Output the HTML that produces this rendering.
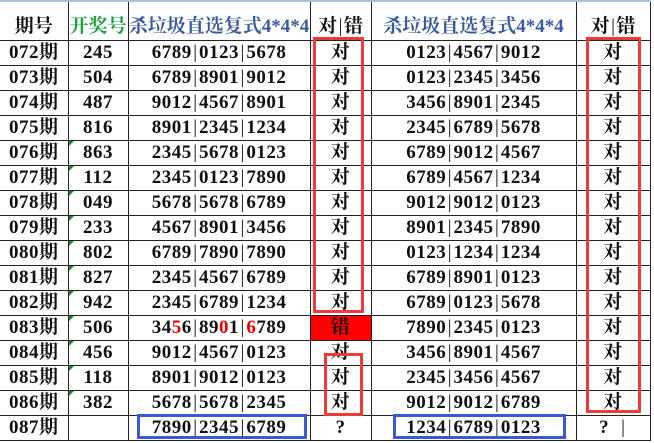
<!DOCTYPE html>
<html><head><meta charset="utf-8"><style>
html,body{margin:0;padding:0;background:#fff;width:654px;height:443px;overflow:hidden;position:relative}
table{position:absolute;left:0;top:0;border-collapse:collapse;table-layout:fixed;font-family:"Liberation Serif","Noto Serif CJK SC",serif;font-weight:bold;font-size:19px;color:#111;letter-spacing:0.5px}
td{border:1px solid #222;height:24px;line-height:22px;padding:0;text-align:center;white-space:nowrap;position:relative;overflow:visible}
tr:first-child td{height:36px;border-top:2px solid #a9c0dc;vertical-align:bottom;padding-bottom:2px;font-size:19px;letter-spacing:0}
td:first-child{border-left:none}
.g{color:#1aa33a}.b{color:#3a5aa0}
.r{color:#e00}
.err{background:#f00}
i{font-style:normal;margin:0 1.5px;font-weight:normal}
.t::before{content:"";position:absolute;left:0;top:0;border-top:5px solid #1a8a2a;border-right:5px solid transparent}
.box{position:absolute;border:3px solid #f03a3a;box-sizing:border-box}
.bb{position:absolute;border:3px solid #3a5ad0;box-sizing:border-box}
</style></head><body>
<table>
<colgroup><col style="width:68px"><col style="width:60px"><col style="width:182px"><col style="width:61px"><col style="width:205px"><col style="width:74px"></colgroup>
<tr><td>期号</td><td class="g">开奖号</td><td class="b">杀垃圾直选复式4*4*4</td><td>对<i>|</i>错</td><td class="b">杀垃圾直选复式4*4*4</td><td>对<i>|</i>错</td></tr>
<tr><td>072期</td><td>245</td><td>6789<i>|</i>0123<i>|</i>5678</td><td>对</td><td>0123<i>|</i>4567<i>|</i>9012</td><td>对</td></tr>
<tr><td>073期</td><td>504</td><td>6789<i>|</i>8901<i>|</i>9012</td><td>对</td><td>0123<i>|</i>2345<i>|</i>3456</td><td>对</td></tr>
<tr><td>074期</td><td>487</td><td>9012<i>|</i>4567<i>|</i>8901</td><td>对</td><td>3456<i>|</i>8901<i>|</i>2345</td><td>对</td></tr>
<tr><td>075期</td><td>816</td><td>8901<i>|</i>2345<i>|</i>1234</td><td>对</td><td>2345<i>|</i>6789<i>|</i>5678</td><td>对</td></tr>
<tr><td>076期</td><td class="t">863</td><td>2345<i>|</i>5678<i>|</i>0123</td><td>对</td><td>6789<i>|</i>9012<i>|</i>4567</td><td>对</td></tr>
<tr><td>077期</td><td class="t">112</td><td>2345<i>|</i>0123<i>|</i>7890</td><td>对</td><td>6789<i>|</i>4567<i>|</i>1234</td><td>对</td></tr>
<tr><td>078期</td><td class="t">049</td><td>5678<i>|</i>5678<i>|</i>6789</td><td>对</td><td>9012<i>|</i>9012<i>|</i>0123</td><td>对</td></tr>
<tr><td>079期</td><td class="t">233</td><td>4567<i>|</i>8901<i>|</i>3456</td><td>对</td><td>8901<i>|</i>2345<i>|</i>7890</td><td>对</td></tr>
<tr><td>080期</td><td class="t">802</td><td>6789<i>|</i>7890<i>|</i>7890</td><td>对</td><td>0123<i>|</i>1234<i>|</i>1234</td><td>对</td></tr>
<tr><td>081期</td><td class="t">827</td><td>2345<i>|</i>4567<i>|</i>6789</td><td>对</td><td>6789<i>|</i>8901<i>|</i>0123</td><td>对</td></tr>
<tr><td>082期</td><td class="t">942</td><td>2345<i>|</i>6789<i>|</i>1234</td><td>对</td><td>6789<i>|</i>0123<i>|</i>5678</td><td>对</td></tr>
<tr><td>083期</td><td class="t">506</td><td>34<span class="r">5</span>6<i>|</i>89<span class="r">0</span>1<i>|</i><span class="r">6</span>789</td><td class="err">错</td><td>7890<i>|</i>2345<i>|</i>0123</td><td>对</td></tr>
<tr><td>084期</td><td class="t">456</td><td>9012<i>|</i>4567<i>|</i>0123</td><td>对</td><td>3456<i>|</i>8901<i>|</i>4567</td><td>对</td></tr>
<tr><td>085期</td><td class="t">118</td><td>8901<i>|</i>9012<i>|</i>0123</td><td>对</td><td>2345<i>|</i>3456<i>|</i>4567</td><td>对</td></tr>
<tr><td>086期</td><td class="t">382</td><td>5678<i>|</i>5678<i>|</i>2345</td><td>对</td><td>9012<i>|</i>9012<i>|</i>6789</td><td>对</td></tr>
<tr><td>087期</td><td></td><td>7890<i>|</i>2345<i>|</i>6789</td><td>?</td><td>1234<i>|</i>6789<i>|</i>0123</td><td>?&nbsp;&nbsp;<i>|</i></td></tr>
</table>
<div class="box" style="left:313px;top:37px;width:51px;height:276px"></div>
<div class="box" style="left:324px;top:353px;width:39px;height:63px"></div>
<div class="box" style="left:586px;top:37px;width:55px;height:376px"></div>
<div class="bb" style="left:137px;top:414px;width:170px;height:25px"></div>
<div class="bb" style="left:393px;top:414px;width:173px;height:25px"></div>
</body></html>
